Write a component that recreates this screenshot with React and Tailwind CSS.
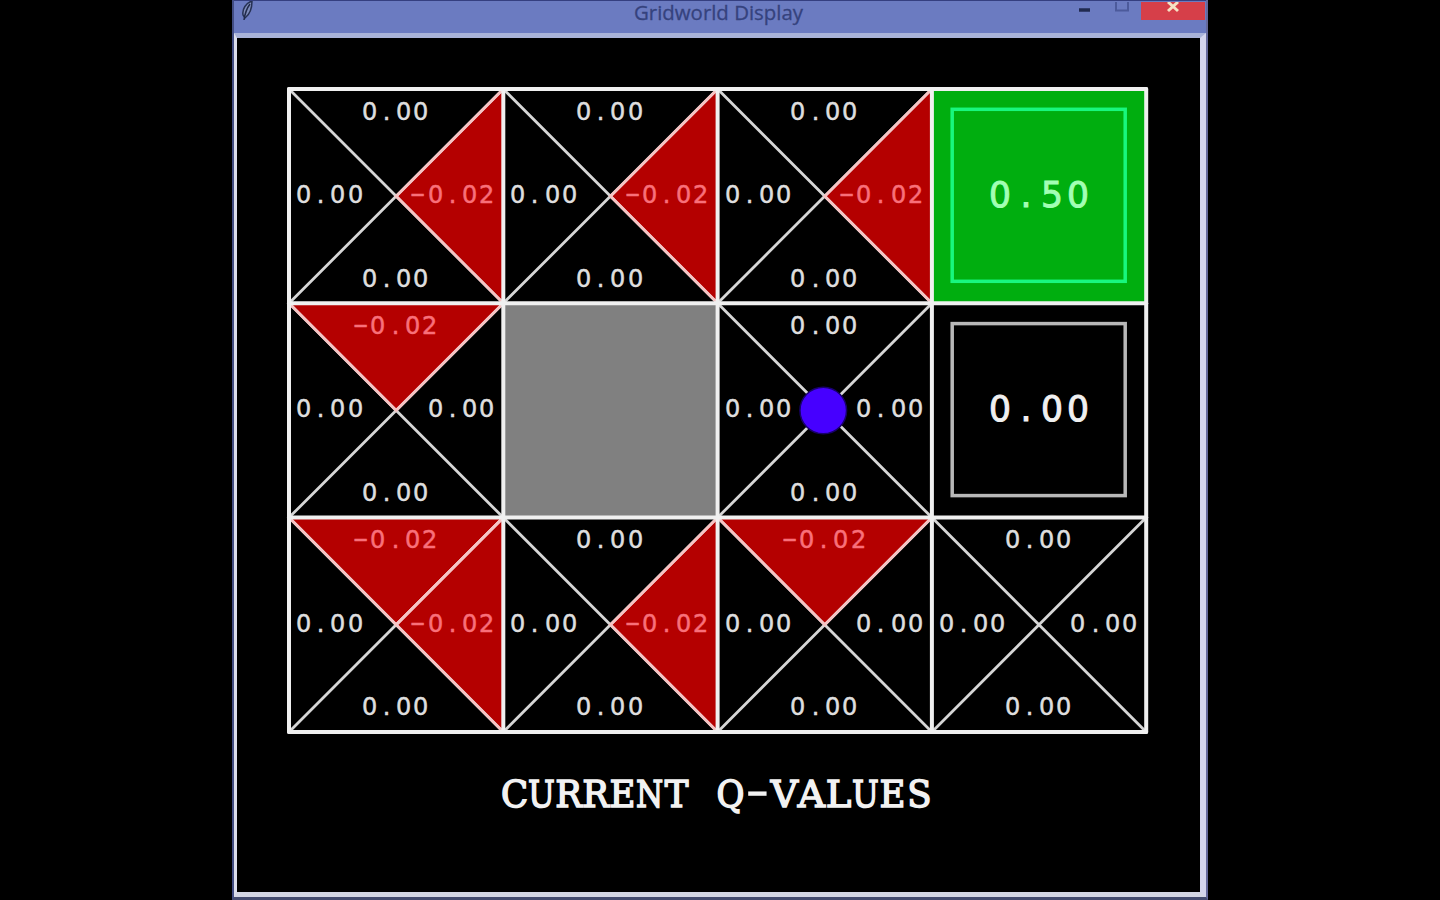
import React from "react";

const CELL = 214.3;

const Z = "0.00";
const N = "-0.02";

// Q-values are listed as [north, west, east, south].
const cells = [
  { q: [Z, Z, N, Z] }, { q: [Z, Z, N, Z] }, { q: [Z, Z, N, Z] }, { exit: "0.50", good: true },
  { q: [N, Z, Z, Z] }, { wall: true }, { q: [Z, Z, Z, Z], agent: true }, { exit: "0.00" },
  { q: [N, Z, N, Z] }, { q: [Z, Z, N, Z] }, { q: [N, Z, Z, Z] }, { q: [Z, Z, Z, Z] },
];

function Value({ text, large, className = "" }) {
  const size = large
    ? "text-[36px] leading-[36px] [-webkit-text-stroke:1px]"
    : "text-[25px] leading-6 [-webkit-text-stroke:0.5px]";
  const slot = large ? "w-[26px]" : "w-[17.2px]";
  return (
    <span className={`flex font-['DejaVu_Sans',sans-serif] ${size} ${className}`}>
      {text.split("").map((ch, i) => (
        <span key={i} className={`flex justify-center ${slot} ${ch === "-" ? "-translate-y-[1.5px] scale-x-[1.75]" : "scale-x-[0.96]"}`}>
          {ch}
        </span>
      ))}
    </span>
  );
}

function Board() {
  const s = CELL;
  return (
    <svg className="absolute -left-1 -top-1" width="866" height="652" viewBox="-4 -4 866 652">
      {cells.map((c, i) => {
        const x = (i % 4) * s;
        const y = Math.floor(i / 4) * s;
        const m = s / 2;
        return (
          <g key={i} transform={`translate(${x} ${y})`}>
            {c.wall && <rect width={s} height={s} fill="#808080" />}
            {c.good && <rect width={s} height={s} fill="#00ae0f" />}
            {c.exit && (
              <rect x="20.3" y="20.3" width="173" height="172" fill="none"
                stroke={c.good ? "#18f77e" : "#b8b8b8"} strokeWidth="3.5" />
            )}
            {c.q && (
              <>
                {c.q[0] === N && <path d={`M0 0H${s}L${m} ${m}Z`} fill="#b40000" />}
                {c.q[2] === N && <path d={`M${s} 0V${s}L${m} ${m}Z`} fill="#b40000" />}
                <path d={`M0 0L${s} ${s}M${s} 0L0 ${s}`} stroke="#d6d6d6" strokeWidth="2.8" />
                {c.q[0] === N && <path d={`M0 0L${m} ${m}L${s} 0`} fill="none" stroke="#f6c4c4" strokeWidth="2.8" />}
                {c.q[2] === N && <path d={`M${s} 0L${m} ${m}L${s} ${s}`} fill="none" stroke="#f6c4c4" strokeWidth="2.8" />}
              </>
            )}
            {c.agent && <circle cx={m - 1.5} cy={m} r="23.3" fill="#4600ff" stroke="#18006c" strokeWidth="1.5" />}
          </g>
        );
      })}
      <g stroke="#f0f0f0" strokeWidth="4" strokeLinecap="round">
        {[0, 1, 2, 3, 4].map((i) => (
          <line key={i} x1={i * s} x2={i * s} y1="0" y2={3 * s} />
        ))}
        {[0, 1, 2, 3].map((i) => (
          <line key={i} y1={i * s} y2={i * s} x1="0" x2={4 * s} />
        ))}
      </g>
    </svg>
  );
}

function CellValues({ cell }) {
  if (cell.exit) {
    return (
      <div className="flex items-center justify-center pb-[3px]">
        <Value text={cell.exit} large className={cell.good ? "text-[#a2ffb4]" : "text-[#f0f0f0]"} />
      </div>
    );
  }
  if (!cell.q) return <div />;
  const [n, w, e, s] = cell.q;
  const tone = (v) => (v === N ? "text-[#f8707a]" : "text-[#dedede]");
  return (
    <div className="flex flex-col items-center justify-between pb-[12.5px] pl-[6px] pr-[8px] pt-[10.5px]">
      <Value text={n} className={tone(n)} />
      <div className="flex w-full justify-between">
        <Value text={w} className={tone(w)} />
        <Value text={e} className={tone(e)} />
      </div>
      <Value text={s} className={tone(s)} />
    </div>
  );
}

// Horizontal scale that fits each serif capital into its fixed-pitch slot.
const widths = {
  "-": "-translate-y-[3px] scale-x-[1.7]",
  U: "scale-x-[0.86]",
  N: "scale-x-[0.84]",
  Q: "scale-x-[0.92]",
  C: "scale-x-[0.96]",
  L: "scale-x-[1.04]",
  A: "scale-x-[1.02]",
  V: "scale-x-[1.02]",
};

function Caption({ text }) {
  return (
    <h1 className="mt-[41px] flex justify-center pr-[4px] font-['DejaVu_Serif',serif] text-[37px] leading-[44px] text-[#f2f2f2] [-webkit-text-stroke:1.5px]">
      {text.split("").map((ch, i) => (
        <span key={i} className={`flex w-[27px] justify-center whitespace-pre ${widths[ch] || "scale-x-[0.96]"}`}>
          {ch}
        </span>
      ))}
    </h1>
  );
}

function TitleBar() {
  return (
    <header className="grid h-[33px] grid-cols-[1fr_auto_1fr] border-t border-[#353f80] bg-[#6b7bc1]">
      <svg className="ml-[5px]" width="18" height="22" viewBox="0 0 18 22" fill="none">
        <path d="M13 0C7 2 3 8 4 14L6 17C10 14 13 8 13 0Z" fill="#7f8cba" stroke="#263154" strokeWidth="1.5" />
        <path d="M11 3C8 7 6 12 5 19" stroke="#202a4b" strokeWidth="1.5" />
      </svg>
      <div className="pr-[3px] font-['Open_Sans',sans-serif] text-[20.4px] leading-[23px] text-[#35427d] [-webkit-text-stroke:0.3px]">
        Gridworld Display
      </div>
      <div className="flex justify-end pr-px pt-px">
        <svg width="62" height="18" viewBox="0 0 62 18" fill="none">
          <path d="M0 8H11" stroke="#202a50" strokeWidth="3.5" />
          <path d="M37 0V8.5H49V0" stroke="#4c5a9b" strokeWidth="2" />
        </svg>
        <div className="flex h-[18px] w-16 justify-center bg-[#d63f49]">
          <svg width="14" height="12" viewBox="0 0 14 12">
            <path d="M2 0L12 9M12 0L2 9" stroke="#f5e2c4" strokeWidth="3" />
          </svg>
        </div>
      </div>
    </header>
  );
}

export default function App() {
  return (
    <div className="flex h-[900px] w-[1440px] overflow-hidden bg-black">
      <main className="ml-[232px] flex h-[900px] w-[976px] flex-col border-b-[3px] border-l-2 border-r-2 border-b-[#454c70] border-l-[#424d83] border-r-[#65699b] bg-black">
        <TitleBar />
        <section className="flex-1 border-b-[5px] border-l-[3px] border-r-[6px] border-t-[5px] border-b-[#d5d7e5] border-l-[#dcdeed] border-r-[#d4d5ed] border-t-[#a9b3d9]">
          <div className="relative ml-[52px] mt-[51px] h-[643px] w-[857.2px]">
            <div className="absolute left-0 top-[-0.5px]">
              <Board />
            </div>
            <div className="relative grid h-full grid-cols-4 grid-rows-3">
              {cells.map((cell, i) => (
                <CellValues key={i} cell={cell} />
              ))}
            </div>
          </div>
          <Caption text="CURRENT Q-VALUES" />
        </section>
      </main>
    </div>
  );
}
